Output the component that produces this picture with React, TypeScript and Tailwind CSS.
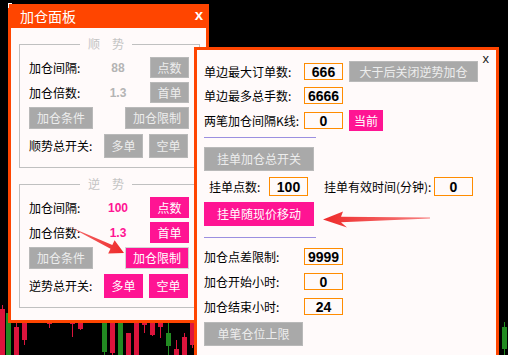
import React from "react";

const cjk = "font-['Noto_Sans_CJK_SC','Microsoft_YaHei',sans-serif]";
const num = "font-['Liberation_Sans',Arial,sans-serif]";

type BtnProps = {
  label: string;
  w: string;
  h: string;
  pink?: boolean;
  edge?: boolean;
};

const Btn = ({ label, w, h, pink, edge }: BtnProps) => {
  const color = pink
    ? "bg-[#ff1493] text-white"
    : "bg-[#a9a9a9] text-[#ededed] border border-[#b9b9b9]";
  return (
    <div
      className={`${w} ${h} ${color} ${
        edge ? "border border-[#d4d4d4]" : ""
      } flex items-center justify-center text-[12px] leading-none shrink-0`}
    >
      {label}
    </div>
  );
};

const NumBox = ({ value, w = "w-[39px]", h = "h-[17px]" }: { value: string; w?: string; h?: string }) => (
  <div
    className={`${w} ${h} border border-[#ff8c00] bg-[#fffafa] flex items-center justify-center ${num} font-bold text-[14px] text-black leading-none shrink-0`}
  >
    {value}
  </div>
);

type GroupProps = {
  title: string;
  active?: boolean;
  toggleLabel: string;
  gap: string;
  step: string;
  className?: string;
};

const Group = ({ title, active, toggleLabel, gap, step, className }: GroupProps) => {
  const valColor = active ? "text-[#ff1493]" : "text-[#b4b4b4]";
  return (
    <div
      className={`relative w-[181px] border border-[#c0c0c0] pl-[9px] pr-[10px] pt-[12px] pb-[9px] flex flex-col ${className ?? ""}`}
    >
      <span className="absolute left-[60px] top-[-10px] px-[8px] bg-[#fffafa] text-[12px] leading-[18px] text-[#c4c4c4]">
        {title}
      </span>
      <div className="h-[21px] flex items-center">
        <span className="w-[75px] text-[12px] text-black">加仓间隔:</span>
        <span className={`w-[28px] text-center ${num} font-bold text-[12px] ${valColor}`}>{gap}</span>
        <div className="ml-auto">
          <Btn label="点数" w="w-[39px]" h="h-[21px]" pink={active} />
        </div>
      </div>
      <div className="h-[21px] mt-[4px] flex items-center">
        <span className="w-[75px] text-[12px] text-black">加仓倍数:</span>
        <span className={`w-[28px] text-center ${num} font-bold text-[12px] ${valColor}`}>{step}</span>
        <div className="ml-auto">
          <Btn label="首单" w="w-[39px]" h="h-[21px]" pink={active} />
        </div>
      </div>
      <div className="h-[22px] mt-[4px] flex items-center justify-between">
        <Btn label="加仓条件" w="w-[64px]" h="h-[22px]" />
        <Btn label="加仓限制" w="w-[64px]" h="h-[22px]" pink={active} edge={active} />
      </div>
      <div className="h-[24px] mt-[5px] flex items-center">
        <span className="w-[75px] text-[12px] text-black">{toggleLabel}</span>
        <Btn label="多单" w="w-[39px]" h="h-[24px]" pink={active} />
        <div className="ml-[6px]">
          <Btn label="空单" w="w-[39px]" h="h-[24px]" pink={active} />
        </div>
      </div>
    </div>
  );
};

// chart candles behind the windows: [x, bodyTop, bodyBottom, wickTop, wickBottom, green]
const candles: [number, number, number, number, number, boolean][] = [
  [0, 309, 355, 305, 355, false],
  [6, 313, 355, 308, 355, true],
  [14, 327, 355, 320, 355, false],
  [22, 323, 340, 320, 345, false],
  [47, 323, 324, 320, 328, false],
  [70, 323, 324, 320, 337, false],
  [78, 323, 329, 320, 330, false],
  [102, 323, 352, 320, 355, true],
  [110, 323, 353, 320, 355, false],
  [118, 323, 355, 320, 355, true],
  [126, 333, 355, 333, 355, false],
  [134, 323, 355, 320, 355, false],
  [142, 323, 325, 320, 333, false],
  [150, 323, 335, 320, 336, false],
  [158, 323, 327, 320, 338, false],
  [166, 333, 346, 320, 355, true],
  [174, 349, 355, 340, 355, false],
  [182, 337, 355, 333, 355, false],
  [190, 323, 345, 320, 348, false],
  [502, 327, 349, 322, 355, true],
];

const Chart = () => (
  <svg className="absolute inset-0" width="508" height="355" viewBox="0 0 508 355">
    {candles.map(([x, bt, bb, wt, wb, g], i) => {
      const c = g ? "#228b22" : "#dc143c";
      return (
        <g key={i}>
          <rect x={x + 2} y={wt} width={1} height={wb - wt} fill={c} />
          <rect x={x} y={bt} width={5} height={Math.max(1, bb - bt)} fill={c} />
        </g>
      );
    })}
  </svg>
);

const Arrows = () => (
  <svg className="absolute inset-0 pointer-events-none" width="508" height="355" viewBox="0 0 508 355">
    <defs>
      <linearGradient id="a1" x1="70" y1="227" x2="124" y2="253" gradientUnits="userSpaceOnUse">
        <stop offset="0" stopColor="#f56b6b" />
        <stop offset="1" stopColor="#ee2a2a" />
      </linearGradient>
      <linearGradient id="a2" x1="430" y1="218" x2="323" y2="219" gradientUnits="userSpaceOnUse">
        <stop offset="0" stopColor="#f78080" />
        <stop offset="1" stopColor="#ee2a2a" />
      </linearGradient>
    </defs>
    <polygon
      points="70,227 112.3,245.1 114.6,240.2 124,253 108.2,253.6 110.5,248.7"
      fill="url(#a1)"
    />
    <polygon
      points="323,219.5 343,211.5 341,216.7 430,217.6 430,218.4 341,222.3 347,227.5"
      fill="url(#a2)"
    />
  </svg>
);

export default function App() {
  return (
    <div className={`relative w-[508px] h-[355px] bg-black overflow-hidden ${cjk}`}>
      <Chart />

      {/* left window */}
      <div className="absolute left-[8px] top-[4px] w-[201px] h-[319px] flex flex-col">
        <div className="relative h-[24px] bg-[#ff4500] flex items-center pl-[12px] shrink-0">
          <span className="text-white text-[14px] leading-none">加仓面板</span>
          <span className={`absolute right-[6px] top-[3px] ${num} font-bold text-white text-[15px] leading-[15px]`}>
            x
          </span>
          <div className="absolute left-0 top-[-1px] w-[4px] h-[1px] bg-white" />
          <div className="absolute left-0 top-[-1px] w-[1px] h-[5px] bg-white" />
        </div>
        <div className="flex-1 bg-[#fffafa] border-[3px] border-t-0 border-[#ff4500] pl-[8px] pt-[16px]">
          <Group title="顺　势" toggleLabel="顺势总开关:" gap="88" step="1.3" />
          <Group title="逆　势" active toggleLabel="逆势总开关:" gap="100" step="1.3" className="mt-[16px]" />
        </div>
      </div>

      {/* right window */}
      <div className="absolute left-[194px] top-[47px] w-[305px] h-[330px] bg-[#fffafa] border-[3px] border-[#ff4500] pl-[7px] flex flex-col text-[12px] text-black">
        <span className={`absolute right-[7px] top-[2px] ${num} text-[13px] leading-[13px] text-[#222]`}>x</span>

        <div className="h-[21px] mt-[11px] flex items-center">
          <span className="w-[100px]">单边最大订单数:</span>
          <NumBox value="666" />
          <div className="ml-[6px]">
            <Btn label="大于后关闭逆势加仓" w="w-[129px]" h="h-[21px]" />
          </div>
        </div>
        <div className="h-[21px] mt-[3px] flex items-center">
          <span className="w-[100px]">单边最多总手数:</span>
          <NumBox value="6666" />
        </div>
        <div className="h-[21px] mt-[4px] flex items-center">
          <span className="w-[100px]">两笔加仓间隔K线:</span>
          <NumBox value="0" />
          <div className="ml-[6px]">
            <Btn label="当前" w="w-[34px]" h="h-[21px]" pink />
          </div>
        </div>
        <div className="w-[112px] h-[1px] mt-[6px] bg-[#9b8fe0]" />

        <div className="mt-[9px]">
          <Btn label="挂单加仓总开关" w="w-[110px]" h="h-[24px]" />
        </div>
        <div className="h-[19px] mt-[6px] pl-[5px] flex items-center">
          <span className="w-[60px]">挂单点数:</span>
          <NumBox value="100" h="h-[19px]" />
          <span className="w-[110px] ml-[16px]">挂单有效时间(分钟):</span>
          <NumBox value="0" h="h-[19px]" />
        </div>
        <div className="mt-[6px]">
          <Btn label="挂单随现价移动" w="w-[110px]" h="h-[24px]" pink />
        </div>
        <div className="w-[112px] h-[1px] mt-[11px] bg-[#9b8fe0]" />

        <div className="h-[21px] mt-[8px] flex items-center">
          <span className="w-[100px]">加仓点差限制:</span>
          <NumBox value="9999" />
        </div>
        <div className="h-[21px] mt-[4px] flex items-center">
          <span className="w-[100px]">加仓开始小时:</span>
          <NumBox value="0" />
        </div>
        <div className="h-[21px] mt-[4px] flex items-center">
          <span className="w-[100px]">加仓结束小时:</span>
          <NumBox value="24" />
        </div>
        <div className="mt-[5px]">
          <Btn label="单笔仓位上限" w="w-[99px]" h="h-[24px]" />
        </div>
      </div>

      <Arrows />
    </div>
  );
}
